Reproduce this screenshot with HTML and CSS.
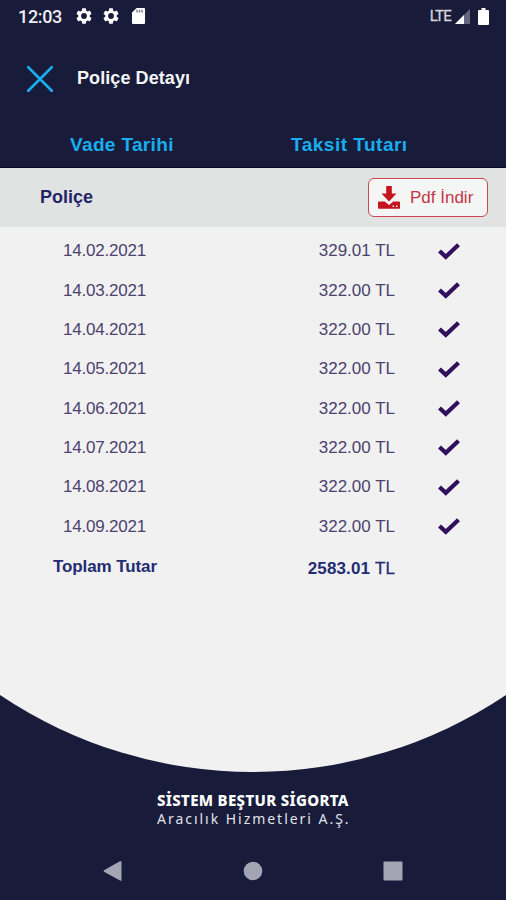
FILE: index.html
```html
<!DOCTYPE html>
<html lang="tr">
<head>
<meta charset="utf-8">
<title>Poliçe Detayı</title>
<link rel="stylesheet" href="styles.css">
</head>
<body>
<svg class="defs" aria-hidden="true">
  <symbol id="check" viewBox="0 0 24 18"><path d="M2.500 9 8.800 14.800 21.500 2.800" fill="none" stroke="#30105c" stroke-width="4.200"/></symbol>
  <symbol id="gear" viewBox="2 2 20 20"><path fill="#fff" d="M19.14 12.94c.04-.3.06-.61.06-.94s-.02-.64-.07-.94l2.03-1.58a.49.49 0 0 0 .12-.61l-1.92-3.32a.49.49 0 0 0-.59-.22l-2.39.96c-.5-.38-1.03-.7-1.62-.94l-.36-2.54A.48.48 0 0 0 13.92 2.4h-3.84c-.24 0-.43.17-.47.41l-.36 2.54c-.59.24-1.13.57-1.62.94l-2.39-.96a.48.48 0 0 0-.59.22L2.74 8.87a.48.48 0 0 0 .12.61l2.03 1.58c-.05.3-.09.63-.09.94s.02.64.07.94l-2.03 1.58a.49.49 0 0 0-.12.61l1.92 3.32c.12.22.37.29.59.22l2.39-.96c.5.38 1.03.7 1.62.94l.36 2.54c.05.24.24.41.48.41h3.84c.24 0 .44-.17.47-.41l.36-2.54c.59-.24 1.13-.56 1.62-.94l2.39.96c.22.08.47 0 .59-.22l1.92-3.32a.48.48 0 0 0-.12-.61zM12 15.6a3.6 3.6 0 1 1 0-7.2 3.6 3.6 0 0 1 0 7.2z"/></symbol>
</svg>
<div class="screen">
  <header class="status">
    <span class="clock">12:03</span>
    <svg class="gear"><use href="#gear"/></svg>
    <svg class="gear"><use href="#gear"/></svg>
    <svg class="card" viewBox="0 0 13 16"><path fill="#fff" d="M4.6 0H12q1 0 1 1v14q0 1-1 1H1q-1 0-1-1V4.6z"/><path d="M5 1.8v2.7M7.5 1.8v2.7M10 1.8v2.7" stroke="#777b8c" stroke-width="1.4"/></svg>
    <span class="lte">LTE</span>
    <svg class="signal" viewBox="0 0 15 15"><path fill="#646780" d="M15 0v15H0z"/><path fill="#fff" d="M9 6v9H0z"/></svg>
    <svg class="battery" viewBox="0 0 11 17"><path fill="#fff" d="M3.5 0h4v2H10q1 0 1 1v13q0 1-1 1H1q-1 0-1-1V3q0-1 1-1h2.500z"/></svg>
  </header>
  <div class="titlebar">
    <svg class="close" viewBox="0 0 26 26"><path d="M1 1 25 25M25 1 1 25" stroke="#18aeef" stroke-width="2.600" stroke-linecap="round"/></svg>
    <h1 class="title">Poliçe Detayı</h1>
  </div>
  <div class="heads"><span class="head-date">Vade Tarihi</span><span class="head-amount">Taksit Tutarı</span></div>
  <div class="policy">
    <span class="policy-name">Poliçe</span>
    <button class="pdf">
      <svg class="download" viewBox="0 0 22 23"><path fill="#c4161f" d="M8.200 0h5.600v7.500H18.500L11 15.500 3.500 7.500h4.700zM1 15.500h5.700L11 19l4.300-3.500H21q1 0 1 1V22q0 .8-.8.8H.8Q0 22.800 0 22v-5.500q0-1 1-1z"/><path d="M14.500 20.200h1.600M18 20.200h1.600" stroke="#f4e4e4" stroke-width="1.500"/></svg>
      <span class="pdf-label">Pdf İndir</span>
    </button>
  </div>
  <main class="rows">
    <div class="row"><span class="date">14.02.2021</span><span class="amount">329.01 TL</span><svg class="check"><use href="#check"/></svg></div>
    <div class="row"><span class="date">14.03.2021</span><span class="amount">322.00 TL</span><svg class="check"><use href="#check"/></svg></div>
    <div class="row"><span class="date">14.04.2021</span><span class="amount">322.00 TL</span><svg class="check"><use href="#check"/></svg></div>
    <div class="row"><span class="date">14.05.2021</span><span class="amount">322.00 TL</span><svg class="check"><use href="#check"/></svg></div>
    <div class="row"><span class="date">14.06.2021</span><span class="amount">322.00 TL</span><svg class="check"><use href="#check"/></svg></div>
    <div class="row"><span class="date">14.07.2021</span><span class="amount">322.00 TL</span><svg class="check"><use href="#check"/></svg></div>
    <div class="row"><span class="date">14.08.2021</span><span class="amount">322.00 TL</span><svg class="check"><use href="#check"/></svg></div>
    <div class="row"><span class="date">14.09.2021</span><span class="amount">322.00 TL</span><svg class="check"><use href="#check"/></svg></div>
    <div class="row total"><span class="total-label">Toplam Tutar</span><span class="amount">2583.01 <span class="unit">TL</span></span></div>
  </main>
  <svg class="curve" viewBox="0 0 506 78"><path fill="#f1f1f1" d="M0 0A454 454 0 0 0 506 0z"/></svg>
  <footer class="brand">
    <div class="brand-name">SİSTEM BEŞTUR SİGORTA</div>
    <div class="brand-sub">Aracılık Hizmetleri A.Ş.</div>
  </footer>
  <nav class="nav">
    <svg class="nav-icon" viewBox="0 0 20 22"><path fill="#a3a5b5" d="M17.500 1q1 0 1 1v18q0 1.200-1 .7L1 11.800q-.9-.8 0-1.500L16.500 1.500z"/></svg>
    <svg class="nav-icon" viewBox="0 0 20 22"><circle cx="10" cy="11" r="9.300" fill="#a3a5b5"/></svg>
    <svg class="nav-icon" viewBox="0 0 20 22"><rect x=".5" y="1.500" width="19" height="19" rx="1" fill="#a3a5b5"/></svg>
  </nav>
</div>
</body>
</html>
```
FILE: styles.css
```css
* { box-sizing: border-box; }
body { margin: 0; background: #181b39; font-family: "Liberation Sans", sans-serif; }
svg { display: block; flex: none; }
.defs { position: absolute; width: 0; height: 0; }
.screen { width: 506px; height: 900px; display: flex; flex-direction: column; overflow: hidden; white-space: nowrap; }

.status { height: 32px; display: flex; align-items: center; padding: 0 17px 0 18px; color: #fff; font-family: Roboto, sans-serif; }
.clock { font-size: 18px; font-weight: 500; width: 58px; letter-spacing: -0.35px; color: #eeeef2; }
.gear { width: 16px; height: 16px; margin-right: 11px; }
.card { width: 13px; height: 16px; margin-left: 2px; }
.lte { margin-left: auto; font-size: 15px; letter-spacing: -0.8px; color: #d4d5dc; -webkit-text-stroke: 0.3px #d4d5dc; }
.signal { width: 15px; height: 15px; margin-left: 4px; }
.battery { width: 11px; height: 17px; margin-left: 8px; }

.titlebar { height: 94px; display: flex; align-items: center; padding-left: 27px; }
.close { width: 26px; height: 26px; }
.title { margin: 0 0 0 24px; padding-bottom: 1px; font-size: 18px; font-weight: 700; letter-spacing: 0.08px; color: #f5f5f8; }

.heads { height: 42px; display: flex; align-items: center; padding: 0 0 4px 70px; font-size: 19px; font-weight: 700; letter-spacing: 0.35px; color: #18aeef; border-bottom: 1px solid #0a0b29; }
.head-date { width: 221px; }
.head-amount { letter-spacing: 0.5px; }

.policy { height: 59px; display: flex; align-items: center; justify-content: space-between; padding: 0 18px 0 40px; background: #e0e3e2; }
.policy-name { font-size: 18px; font-weight: 700; color: #242567; }
.pdf { width: 120px; height: 39px; display: flex; align-items: center; padding: 0 0 0 9px; border: 1.500px solid #ca4950; border-radius: 6px; background: #f4f5f5; color: #c33742; font: 17px "Liberation Sans", sans-serif; }
.download { width: 22px; height: 23px; margin-right: 10px; }

.rows { height: 468px; padding-top: 4.6px; background: #f1f1f1; }
.row { height: 39.35px; display: grid; grid-template-columns: 63px 200px 132px 42px 24px; align-items: center; font-size: 17px; color: #4c426f; }
.date { grid-column: 2; letter-spacing: -0.22px; }
.amount { grid-column: 3; justify-self: end; }
.check { grid-column: 5; width: 24px; height: 18px; margin-top: -1px; }
.total { color: #242c72; }
.total-label { grid-column: 2; margin-left: -10px; padding-top: 1px; font-weight: 700; letter-spacing: -0.1px; }
.total .amount { font-weight: 700; padding-top: 5px; letter-spacing: 0.12px; }
.total .unit { font-weight: 400; -webkit-text-stroke: 0.3px #242c72; }

.curve { width: 506px; height: 78px; }
.brand { height: 69px; padding: 18px 0 0 157px; color: #fff; }
.brand-name { font: 800 15px/18px "Noto Sans", sans-serif; letter-spacing: 0.32px; }
.brand-sub { font: 14px/20px "Noto Sans", sans-serif; letter-spacing: 1.970px; color: #e2e3ea; }
.nav { height: 58px; display: flex; justify-content: space-between; align-items: center; padding: 0 103px; }
.nav-icon { width: 20px; height: 22px; }
```
